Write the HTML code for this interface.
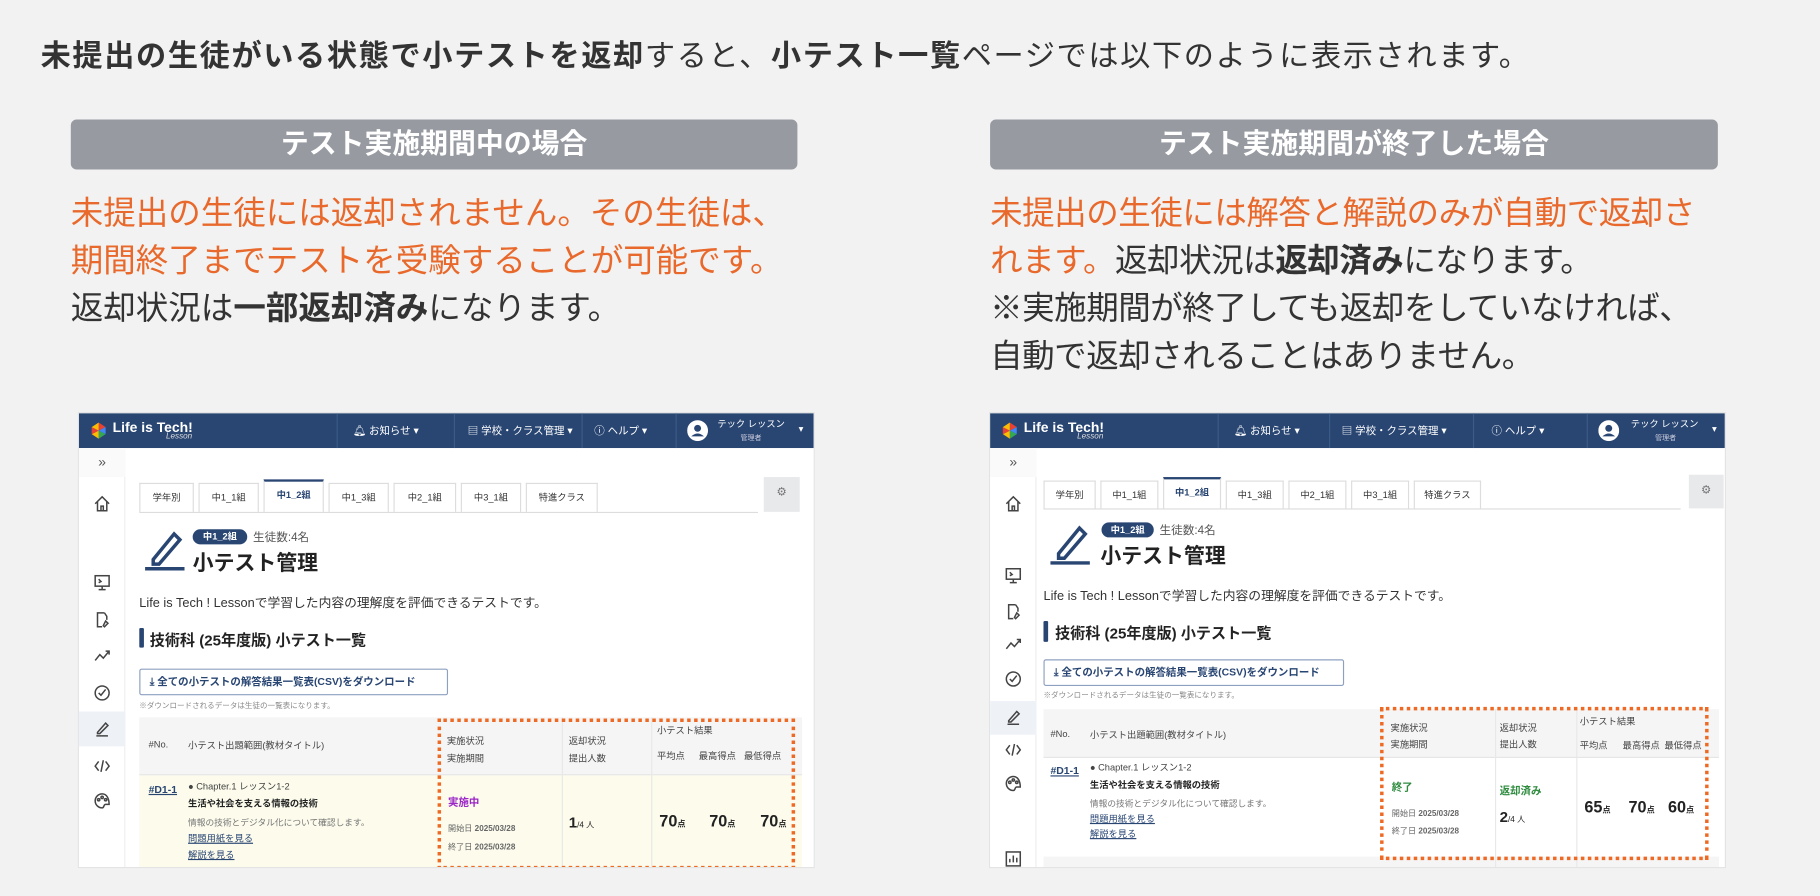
<!DOCTYPE html>
<html><head><meta charset="utf-8">
<style>
*{margin:0;padding:0;box-sizing:border-box}
html,body{width:1820px;height:896px;overflow:hidden;background:#f2f2f2}
#w{position:absolute;left:0;top:0;width:1568px;height:772px;transform:scale(1.160714);transform-origin:0 0;font-family:"Liberation Sans","Noto Sans CJK JP",sans-serif;color:#333}
.a{position:absolute;white-space:nowrap}
.h1{left:35px;top:33px;font-size:26px;line-height:30px;letter-spacing:1.4px;color:#333}
b{font-weight:700}
.gbox{position:absolute;top:103px;height:43px;background:#979ba1;border-radius:5px;color:#fff;font-weight:700;font-size:24px;text-align:center;line-height:43px}
.txt{position:absolute;top:163px;font-size:28px;line-height:41px;color:#333;white-space:nowrap}
.o{color:#e8692b}
.ss{position:absolute;top:355px;width:635px;height:393px;background:#fff;overflow:hidden;border:1px solid #e3e3e3}
.nav{position:absolute;left:0;top:0;width:100%;height:30px;background:#294673;color:#fff}
.nav .s{position:absolute;top:0;height:30px;width:1px;background:#3d5a86}
.nav .i{position:absolute;top:9px;font-size:9px;line-height:12px}
.side{position:absolute;left:0;top:30px;width:40px;bottom:0;background:#fff;border-right:1px solid #eee}
.ic{position:absolute;left:12px;width:16px;height:16px}
.tab{position:absolute;height:25px;border:1px solid #ddd;border-bottom:none;font-size:8px;line-height:24px;text-align:center;color:#333;background:#fff}
.tab.on{color:#294673;border-top:2px solid #294673;font-weight:700}
.t8{font-size:8px;color:#444}
.bold{font-weight:700}
.lnk{color:#294673;text-decoration:underline}
.dot{position:absolute;border:3px dotted #ee6a24}
</style></head><body><div id="w">

<div class="a h1"><b>未提出の生徒がいる状態で小テストを返却</b>すると、<b>小テスト一覧</b>ページでは以下のように表示されます。</div>

<div class="gbox" style="left:61px;width:626px">テスト実施期間中の場合</div>
<div class="gbox" style="left:853px;width:627px">テスト実施期間が終了した場合</div>

<div class="txt" style="left:61px"><span class="o">未提出の生徒には返却されません。その生徒は、<br>期間終了までテストを受験することが可能です。</span><br>返却状況は<b>一部返却済み</b>になります。</div>
<div class="txt" style="left:853px;letter-spacing:-.4px"><span class="o">未提出の生徒には解答と解説のみが自動で返却さ<br>れます。</span>返却状況は<b>返却済み</b>になります。<br>※実施期間が終了しても返却をしていなければ、<br>自動で返却されることはありません。</div>

<!-- LEFT SCREENSHOT -->
<div class="ss" style="left:67px">
 <div class="nav">
  <svg class="a" style="left:9px;top:7px" width="16" height="16" viewBox="0 0 16 16"><path d="M8 1 L14 5 L8 8Z" fill="#e94235"/><path d="M14 5 L14 11 L8 8Z" fill="#4285f4"/><path d="M14 11 L8 15 L8 8Z" fill="#34a853"/><path d="M8 15 L2 11 L8 8Z" fill="#fbbc05"/><path d="M2 11 L2 5 L8 8Z" fill="#e94235"/><path d="M2 5 L8 1 L8 8Z" fill="#fbbc05"/></svg>
  <div class="a" style="left:29px;top:5px;font-size:12px;font-weight:700;color:#fff">Life is Tech!</div>
  <div class="a" style="left:75px;top:17px;font-size:7px;font-style:italic;color:#ddd">Lesson</div>
  <div class="s" style="left:222px"></div><div class="s" style="left:323px"></div><div class="s" style="left:433px"></div><div class="s" style="left:514px"></div>
  <div class="i" style="left:236px">🔔︎ お知らせ ▾</div>
  <div class="i" style="left:323px;padding-left:12px">▤ 学校・クラス管理 ▾</div>
  <div class="i" style="left:444px">ⓘ ヘルプ ▾</div>
  <svg class="a" style="left:524px;top:6px" width="18" height="18" viewBox="0 0 18 18"><circle cx="9" cy="9" r="9" fill="#fff"/><circle cx="9" cy="7" r="3" fill="#294673"/><path d="M3.5 14 Q9 9 14.5 14" fill="#294673"/></svg>
  <div class="a" style="left:550px;top:4px;font-size:8px">テック レッスン</div>
  <div class="a" style="left:570px;top:16px;font-size:6px;color:#ccd">管理者</div>
  <div class="a" style="left:620px;top:9px;font-size:8px">▾</div>
 </div>
 <div class="side">
  <div class="a" style="left:0;top:0;width:40px;height:25px;background:#fafafa;font-size:12px;text-align:center;line-height:25px;color:#555">»</div>
  <svg class="ic" style="top:40px" viewBox="0 0 16 16" fill="none" stroke="#444" stroke-width="1.3"><path d="M2 8 L8 2 L14 8 M4 6 V14 H12 V6 M7 14 V10 H9 V14"/></svg>
  <svg class="ic" style="top:108px" viewBox="0 0 16 16" fill="none" stroke="#444" stroke-width="1.3"><rect x="2" y="2" width="12" height="9"/><path d="M5 5 L7 7 L5 8 M8 14 V11 M5 14 H11"/></svg>
  <svg class="ic" style="top:140px" viewBox="0 0 16 16" fill="none" stroke="#444" stroke-width="1.3"><path d="M10 2 H4 V14 H8 M10 2 L12 5 V8 M11 9 L13 11 L10 14 L9 13Z"/></svg>
  <svg class="ic" style="top:171px" viewBox="0 0 16 16" fill="none" stroke="#444" stroke-width="1.3"><path d="M2 12 L6 7 L9 10 L14 4 M11 4 H14 V7"/></svg>
  <svg class="ic" style="top:203px" viewBox="0 0 16 16" fill="none" stroke="#444" stroke-width="1.3"><circle cx="8" cy="8" r="6"/><path d="M5 8 L7 10 L11 5"/></svg>
  <div class="a" style="left:0;top:227px;width:40px;height:30px;background:#eef2f7"></div>
  <svg class="ic" style="top:234px" viewBox="0 0 16 16" fill="none" stroke="#444" stroke-width="1.3"><path d="M4 11 L11 3 L13 5 L6 12 L4 12Z M3 14 H13"/></svg>
  <svg class="ic" style="top:266px" viewBox="0 0 16 16" fill="none" stroke="#444" stroke-width="1.3"><path d="M5 4 L2 8 L5 12 M11 4 L14 8 L11 12 M9 3 L7 13"/></svg>
  <svg class="ic" style="top:296px" viewBox="0 0 16 16" fill="none" stroke="#444" stroke-width="1.3"><path d="M8 2 A6 6 0 1 0 8 14 C10 14 9 11 11 11 H14 C14 6 12 2 8 2Z"/><circle cx="5" cy="7" r="1"/><circle cx="8" cy="5" r="1"/><circle cx="11" cy="7" r="1"/></svg>
 </div>
 <div class="tab" style="left:52px;top:60px;width:47px">学年別</div>
 <div class="tab" style="left:103px;top:60px;width:52px">中1_1組</div>
 <div class="tab on" style="left:159px;top:57px;height:28px;width:52px">中1_2組</div>
 <div class="tab" style="left:215px;top:60px;width:52px">中1_3組</div>
 <div class="tab" style="left:271px;top:60px;width:54px">中2_1組</div>
 <div class="tab" style="left:329px;top:60px;width:52px">中3_1組</div>
 <div class="tab" style="left:385px;top:60px;width:62px">特進クラス</div>
 <div class="a" style="left:52px;top:85px;width:533px;height:1px;background:#ddd"></div>
 <div class="a" style="left:590px;top:55px;width:31px;height:30px;background:#e8e9eb;text-align:center;line-height:28px;font-size:10px;color:#777">⚙</div>
 <svg class="a" style="left:55px;top:100px" width="36" height="36" viewBox="0 0 36 36" fill="none" stroke="#294673" stroke-width="3"><path d="M9 26 L27 4 L32 9 L14 30 L9 30Z"/><path d="M2 34 H36"/></svg>
 <div class="a" style="left:98px;top:100px;width:47px;height:13px;border-radius:7px;background:#294673;color:#fff;font-size:8px;font-weight:700;text-align:center;line-height:13px">中1_2組</div>
 <div class="a" style="left:150px;top:98px;font-size:10px;color:#555">生徒数:4名</div>
 <div class="a" style="left:98px;top:115px;font-size:18px;font-weight:700;color:#222">小テスト管理</div>
 <div class="a" style="left:52px;top:155px;font-size:11px;color:#333">Life is Tech ! Lessonで学習した内容の理解度を評価できるテストです。</div>
 <div class="a" style="left:52px;top:185px;width:4px;height:17px;background:#294673;border-radius:1px"></div>
 <div class="a" style="left:61px;top:185px;font-size:13px;font-weight:700;color:#222">技術科 (25年度版) 小テスト一覧</div>
 <div class="a" style="left:52px;top:220px;width:266px;height:23px;border:1px solid #8da0c0;border-radius:2px;color:#294673;font-size:9px;font-weight:700;line-height:21px;padding-left:8px">⤓ 全ての小テストの解答結果一覧表(CSV)をダウンロード</div>
 <div class="a" style="left:52px;top:246px;font-size:6.5px;color:#888">※ダウンロードされるデータは生徒の一覧表になります。</div>
 <div class="a" style="left:52px;top:262px;width:571px;height:50px;background:#f5f5f5;border-bottom:1px solid #e5e5e5"></div>
 <div class="a" style="left:52px;top:312px;width:571px;height:81px;background:#fcfbec"></div>
 <div class="a" style="left:416px;top:262px;width:1px;height:131px;background:#e8e8e8"></div>
 <div class="a" style="left:493px;top:262px;width:1px;height:131px;background:#e8e8e8"></div>
 <div class="a t8" style="left:60px;top:281px">#No.</div>
 <div class="a t8" style="left:94px;top:281px">小テスト出題範囲(教材タイトル)</div>
 <div class="a t8" style="left:317px;top:275px;line-height:15px">実施状況<br>実施期間</div>
 <div class="a t8" style="left:422px;top:275px;line-height:15px">返却状況<br>提出人数</div>
 <div class="a t8" style="left:498px;top:268px">小テスト結果</div>
 <div class="a t8" style="left:498px;top:290px">平均点</div>
 <div class="a t8" style="left:534px;top:290px">最高得点</div>
 <div class="a t8" style="left:573px;top:290px">最低得点</div>
 <div class="a lnk bold" style="left:60px;top:319px;font-size:9px">#D1-1</div>
 <div class="a t8" style="left:94px;top:316px">● Chapter.1 レッスン1-2</div>
 <div class="a t8 bold" style="left:94px;top:331px;color:#222">生活や社会を支える情報の技術</div>
 <div class="a" style="left:94px;top:347px;font-size:7.5px;color:#777">情報の技術とデジタル化について確認します。</div>
 <div class="a t8 lnk" style="left:94px;top:361px">問題用紙を見る</div>
 <div class="a t8 lnk" style="left:94px;top:375px">解説を見る</div>
 <div class="a" style="left:318px;top:328px;font-size:9px;font-weight:700;color:#9b25c7">実施中</div>
 <div class="a" style="left:318px;top:353px;font-size:7px;color:#666">開始日 <b>2025/03/28</b></div>
 <div class="a" style="left:318px;top:369px;font-size:7px;color:#666">終了日 <b>2025/03/28</b></div>
 <div class="a" style="left:422px;top:345px;font-size:13px;font-weight:700;color:#222">1<span style="font-size:7px;font-weight:400">/4 人</span></div>
 <div class="a" style="left:500px;top:343px;font-size:14px;font-weight:700;color:#222">70<span style="font-size:7px">点</span></div>
 <div class="a" style="left:543px;top:343px;font-size:14px;font-weight:700;color:#222">70<span style="font-size:7px">点</span></div>
 <div class="a" style="left:587px;top:343px;font-size:14px;font-weight:700;color:#222">70<span style="font-size:7px">点</span></div>
 <div class="dot" style="left:309px;top:263px;width:308px;height:130px"></div>
</div>

<!-- RIGHT SCREENSHOT -->
<div class="ss" style="left:852px">
 <div class="nav">
  <svg class="a" style="left:9px;top:7px" width="16" height="16" viewBox="0 0 16 16"><path d="M8 1 L14 5 L8 8Z" fill="#e94235"/><path d="M14 5 L14 11 L8 8Z" fill="#4285f4"/><path d="M14 11 L8 15 L8 8Z" fill="#34a853"/><path d="M8 15 L2 11 L8 8Z" fill="#fbbc05"/><path d="M2 11 L2 5 L8 8Z" fill="#e94235"/><path d="M2 5 L8 1 L8 8Z" fill="#fbbc05"/></svg>
  <div class="a" style="left:29px;top:5px;font-size:12px;font-weight:700;color:#fff">Life is Tech!</div>
  <div class="a" style="left:75px;top:17px;font-size:7px;font-style:italic;color:#ddd">Lesson</div>
  <div class="s" style="left:196px"></div><div class="s" style="left:292px"></div><div class="s" style="left:416px"></div><div class="s" style="left:514px"></div>
  <div class="i" style="left:210px">🔔︎ お知らせ ▾</div>
  <div class="i" style="left:303px">▤ 学校・クラス管理 ▾</div>
  <div class="i" style="left:432px">ⓘ ヘルプ ▾</div>
  <svg class="a" style="left:524px;top:6px" width="18" height="18" viewBox="0 0 18 18"><circle cx="9" cy="9" r="9" fill="#fff"/><circle cx="9" cy="7" r="3" fill="#294673"/><path d="M3.5 14 Q9 9 14.5 14" fill="#294673"/></svg>
  <div class="a" style="left:552px;top:4px;font-size:8px">テック レッスン</div>
  <div class="a" style="left:573px;top:16px;font-size:6px;color:#ccd">管理者</div>
  <div class="a" style="left:622px;top:9px;font-size:8px">▾</div>
 </div>
 <div class="side">
  <div class="a" style="left:0;top:0;width:40px;height:25px;background:#fafafa;font-size:12px;text-align:center;line-height:25px;color:#555">»</div>
  <svg class="ic" style="top:40px" viewBox="0 0 16 16" fill="none" stroke="#444" stroke-width="1.3"><path d="M2 8 L8 2 L14 8 M4 6 V14 H12 V6 M7 14 V10 H9 V14"/></svg>
  <svg class="ic" style="top:102px" viewBox="0 0 16 16" fill="none" stroke="#444" stroke-width="1.3"><rect x="2" y="2" width="12" height="9"/><path d="M5 5 L7 7 L5 8 M8 14 V11 M5 14 H11"/></svg>
  <svg class="ic" style="top:133px" viewBox="0 0 16 16" fill="none" stroke="#444" stroke-width="1.3"><path d="M10 2 H4 V14 H8 M10 2 L12 5 V8 M11 9 L13 11 L10 14 L9 13Z"/></svg>
  <svg class="ic" style="top:161px" viewBox="0 0 16 16" fill="none" stroke="#444" stroke-width="1.3"><path d="M2 12 L6 7 L9 10 L14 4 M11 4 H14 V7"/></svg>
  <svg class="ic" style="top:191px" viewBox="0 0 16 16" fill="none" stroke="#444" stroke-width="1.3"><circle cx="8" cy="8" r="6"/><path d="M5 8 L7 10 L11 5"/></svg>
  <div class="a" style="left:0;top:218px;width:40px;height:29px;background:#eef2f7"></div>
  <svg class="ic" style="top:224px" viewBox="0 0 16 16" fill="none" stroke="#444" stroke-width="1.3"><path d="M4 11 L11 3 L13 5 L6 12 L4 12Z M3 14 H13"/></svg>
  <svg class="ic" style="top:252px" viewBox="0 0 16 16" fill="none" stroke="#444" stroke-width="1.3"><path d="M5 4 L2 8 L5 12 M11 4 L14 8 L11 12 M9 3 L7 13"/></svg>
  <svg class="ic" style="top:281px" viewBox="0 0 16 16" fill="none" stroke="#444" stroke-width="1.3"><path d="M8 2 A6 6 0 1 0 8 14 C10 14 9 11 11 11 H14 C14 6 12 2 8 2Z"/><circle cx="5" cy="7" r="1"/><circle cx="8" cy="5" r="1"/><circle cx="11" cy="7" r="1"/></svg>
  <svg class="ic" style="top:346px" viewBox="0 0 16 16" fill="none" stroke="#444" stroke-width="1.3"><rect x="2" y="2" width="12" height="12"/><path d="M5 11 V8 M8 11 V5 M11 11 V7"/></svg>
 </div>
 <div class="tab" style="left:46px;top:58px;width:45px">学年別</div>
 <div class="tab" style="left:95px;top:58px;width:50px">中1_1組</div>
 <div class="tab on" style="left:149px;top:55px;height:27px;width:50px">中1_2組</div>
 <div class="tab" style="left:203px;top:58px;width:50px">中1_3組</div>
 <div class="tab" style="left:257px;top:58px;width:50px">中2_1組</div>
 <div class="tab" style="left:311px;top:58px;width:50px">中3_1組</div>
 <div class="tab" style="left:365px;top:58px;width:58px">特進クラス</div>
 <div class="a" style="left:46px;top:82px;width:549px;height:1px;background:#ddd"></div>
 <div class="a" style="left:602px;top:53px;width:30px;height:29px;background:#e8e9eb;text-align:center;line-height:27px;font-size:10px;color:#777">⚙</div>
 <svg class="a" style="left:50px;top:95px" width="36" height="36" viewBox="0 0 36 36" fill="none" stroke="#294673" stroke-width="3"><path d="M9 26 L27 4 L32 9 L14 30 L9 30Z"/><path d="M2 34 H36"/></svg>
 <div class="a" style="left:96px;top:94px;width:45px;height:13px;border-radius:7px;background:#294673;color:#fff;font-size:8px;font-weight:700;text-align:center;line-height:13px">中1_2組</div>
 <div class="a" style="left:146px;top:92px;font-size:10px;color:#555">生徒数:4名</div>
 <div class="a" style="left:95px;top:109px;font-size:18px;font-weight:700;color:#222">小テスト管理</div>
 <div class="a" style="left:46px;top:149px;font-size:11px;color:#333">Life is Tech ! Lessonで学習した内容の理解度を評価できるテストです。</div>
 <div class="a" style="left:46px;top:179px;width:4px;height:18px;background:#294673;border-radius:1px"></div>
 <div class="a" style="left:56px;top:179px;font-size:13px;font-weight:700;color:#222">技術科 (25年度版) 小テスト一覧</div>
 <div class="a" style="left:46px;top:212px;width:259px;height:23px;border:1px solid #8da0c0;border-radius:2px;color:#294673;font-size:9px;font-weight:700;line-height:21px;padding-left:8px">⤓ 全ての小テストの解答結果一覧表(CSV)をダウンロード</div>
 <div class="a" style="left:46px;top:237px;font-size:6.5px;color:#888">※ダウンロードされるデータは生徒の一覧表になります。</div>
 <div class="a" style="left:46px;top:255px;width:582px;height:42px;background:#f5f5f5;border-bottom:1px solid #e5e5e5"></div>
 <div class="a" style="left:46px;top:382px;width:582px;height:11px;background:#f5f5f5"></div>
 <div class="a" style="left:435px;top:255px;width:1px;height:138px;background:#e8e8e8"></div>
 <div class="a" style="left:505px;top:255px;width:1px;height:138px;background:#e8e8e8"></div>
 <div class="a t8" style="left:52px;top:272px">#No.</div>
 <div class="a t8" style="left:86px;top:272px">小テスト出題範囲(教材タイトル)</div>
 <div class="a t8" style="left:345px;top:265px;line-height:14px">実施状況<br>実施期間</div>
 <div class="a t8" style="left:439px;top:265px;line-height:14px">返却状況<br>提出人数</div>
 <div class="a t8" style="left:508px;top:260px">小テスト結果</div>
 <div class="a t8" style="left:508px;top:281px">平均点</div>
 <div class="a t8" style="left:545px;top:281px">最高得点</div>
 <div class="a t8" style="left:581px;top:281px">最低得点</div>
 <div class="a lnk bold" style="left:52px;top:303px;font-size:9px">#D1-1</div>
 <div class="a t8" style="left:86px;top:300px">● Chapter.1 レッスン1-2</div>
 <div class="a t8 bold" style="left:86px;top:315px;color:#222">生活や社会を支える情報の技術</div>
 <div class="a" style="left:86px;top:331px;font-size:7.5px;color:#777">情報の技術とデジタル化について確認します。</div>
 <div class="a t8 lnk" style="left:86px;top:344px">問題用紙を見る</div>
 <div class="a t8 lnk" style="left:86px;top:357px">解説を見る</div>
 <div class="a" style="left:346px;top:315px;font-size:9px;font-weight:700;color:#2e8b3e">終了</div>
 <div class="a" style="left:346px;top:340px;font-size:7px;color:#666">開始日 <b>2025/03/28</b></div>
 <div class="a" style="left:346px;top:355px;font-size:7px;color:#666">終了日 <b>2025/03/28</b></div>
 <div class="a" style="left:439px;top:318px;font-size:9px;font-weight:700;color:#2e8b3e">返却済み</div>
 <div class="a" style="left:439px;top:340px;font-size:13px;font-weight:700;color:#222">2<span style="font-size:7px;font-weight:400">/4 人</span></div>
 <div class="a" style="left:512px;top:331px;font-size:14px;font-weight:700;color:#222">65<span style="font-size:7px">点</span></div>
 <div class="a" style="left:550px;top:331px;font-size:14px;font-weight:700;color:#222">70<span style="font-size:7px">点</span></div>
 <div class="a" style="left:584px;top:331px;font-size:14px;font-weight:700;color:#222">60<span style="font-size:7px">点</span></div>
 <div class="dot" style="left:336px;top:253px;width:283px;height:132px"></div>
</div>

</div></body></html>
